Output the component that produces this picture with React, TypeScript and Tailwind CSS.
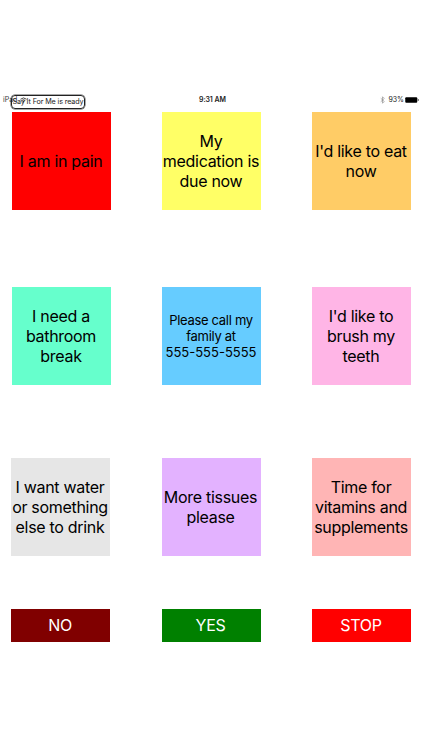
import clsx from "clsx";

type Tile = {
  lines: string[];
  className: string;
};

const rows: { className: string; tiles: Tile[] }[] = [
  {
    className: "mt-[5.5px] pl-[12px] h-[98.5px]",
    tiles: [
      { lines: ["I am in pain"], className: "bg-[#ff0000]" },
      { lines: ["My", "medication is", "due now"], className: "bg-[#ffff66]" },
      { lines: ["I'd like to eat", "now"], className: "bg-[#ffcc66]" },
    ],
  },
  {
    className: "mt-[76.5px] pl-[12px] h-[98.5px]",
    tiles: [
      { lines: ["I need a", "bathroom", "break"], className: "bg-[#66ffcc]" },
      {
        lines: ["Please call my", "family at", "555-555-5555"],
        className: "bg-[#66ccff] text-[13px] leading-[15.8px]",
      },
      { lines: ["I'd like to", "brush my", "teeth"], className: "bg-[#ffb5e6]" },
    ],
  },
  {
    className: "mt-[72.5px] pl-[11px] h-[98.5px]",
    tiles: [
      {
        lines: ["I want water", "or something", "else to drink"],
        className: "bg-[#e6e6e6]",
      },
      { lines: ["More tissues", "please"], className: "bg-[#e3b2ff]" },
      {
        lines: ["Time for", "vitamins and", "supplements"],
        className: "bg-[#ffb5b5]",
      },
    ],
  },
  {
    className: "mt-[52.5px] pl-[11px] h-[33px] text-white",
    tiles: [
      { lines: ["NO"], className: "bg-[#800000]" },
      { lines: ["YES"], className: "bg-[#008000]" },
      { lines: ["STOP"], className: "bg-[#ff0000]" },
    ],
  },
];

function PhraseButton({ lines, className }: Tile) {
  return (
    <button
      className={clsx(
        "flex h-full w-[99px] shrink-0 flex-col items-center justify-center pt-[2px] pr-[1px] whitespace-nowrap",
        className
      )}
    >
      {lines.map((line) => (
        <span
          key={line}
          className={/^\d/.test(line) ? "tracking-normal" : "tracking-[-0.3px]"}
        >
          {line}
        </span>
      ))}
    </button>
  );
}

function StatusBar() {
  return (
    <div className="relative flex h-[13px] items-center justify-between pr-[3px] pl-[3px] text-[7px] leading-none">
      <div className="flex items-center gap-[3px] text-[#333]">
        <span>iPad</span>
        <svg width="7" height="6" viewBox="0 0 14 11" fill="none">
          <path
            d="M1 4a9 9 0 0 1 12 0M3.5 6.5a5.5 5.5 0 0 1 7 0"
            stroke="currentColor"
            strokeWidth="1.8"
          />
          <path d="M7 11 4.8 8.5a3 3 0 0 1 4.4 0Z" fill="currentColor" />
        </svg>
      </div>
      <span className="absolute left-[199px] text-[7px] font-semibold tracking-[-0.1px] text-[#222]">
        9:31 AM
      </span>
      <div className="flex items-center">
        <svg
          width="5"
          height="8"
          viewBox="0 0 10 16"
          fill="none"
          stroke="#888"
          strokeWidth="1.3"
          className="mr-[3px]"
        >
          <path d="M1.5 4.5 8.5 11 5 14.5v-13L8.5 5l-7 6.5" />
        </svg>
        <span className="mr-[1px] text-[#222]">93%</span>
        <svg width="14" height="6" viewBox="0 0 14 6">
          <rect x="0.25" y="0.25" width="12" height="5.5" rx="1" fill="#000" />
          <path d="M12.8 2v2q1-.3 1-1t-1-1Z" fill="#000" />
        </svg>
      </div>
      <div className="absolute top-[2px] left-[11px] flex h-[14px] w-[74px] items-center justify-center rounded-[4px] border border-[#222] text-[7.2px] tracking-[-0.12px] whitespace-nowrap text-[#222] ring-[0.5px] ring-[#555]">
        Say It For Me is ready
      </div>
    </div>
  );
}

export default function App() {
  return (
    <main className="h-[750px] w-[422px] overflow-hidden bg-white pt-[93px] font-['Inter',sans-serif] text-[16px] leading-[19.7px] text-black">
      <StatusBar />
      {rows.map((row, i) => (
        <div
          key={i}
          className={clsx("flex justify-between pr-[11px]", row.className)}
        >
          {row.tiles.map((tile) => (
            <PhraseButton key={tile.lines[0]} {...tile} />
          ))}
        </div>
      ))}
    </main>
  );
}
